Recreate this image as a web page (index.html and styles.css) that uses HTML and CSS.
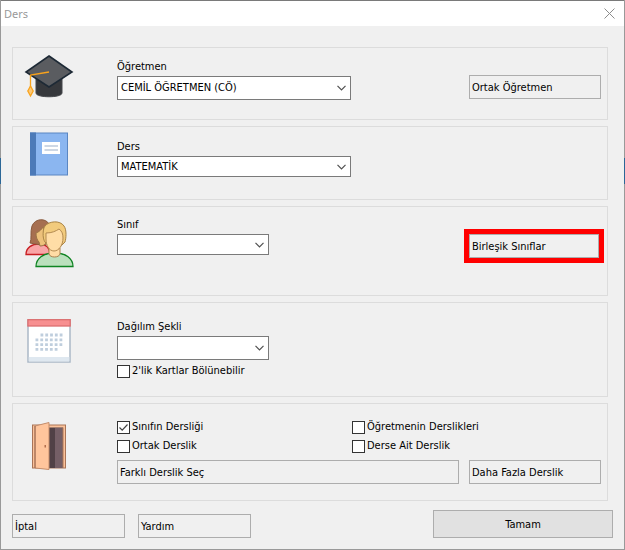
FILE: index.html
```html
<!DOCTYPE html>
<html lang="tr">

<head>
    <meta charset="utf-8">
    <title>Ders</title>
    <link rel="stylesheet" href="styles.css">
</head>

<body>
    <form class="dialog" onsubmit="return false">
        <header class="titlebar">
            <h1>Ders</h1>
            <button type="button" class="close" aria-label="Kapat">
                <svg width="11" height="11" viewBox="0 0 11 11">
                    <path d="M.5 .5l10 10M10.5 .5l-10 10" stroke="#8c8c8c" fill="none" />
                </svg>
            </button>
        </header>

        <main class="content">
            <!-- Teacher -->
            <section class="group teacher">
                <svg class="icon" viewBox="0 0 50 64">
                    <path d="M12 22v19c0 5 26 5 26 0V22z" fill="#36383c" stroke="#45474b" />
                    <path d="M25 4L48 20 25 35 2 20z" fill="#5a5c60" stroke="#1d2935" stroke-width="1.6" />
                    <path d="M25 20L6.500 23v15" fill="none" stroke="#f9a31c" stroke-width="1.300" />
                    <path d="M6.500 34l-2.700 5 2.700 5 2.700-5z" fill="#fdc978" stroke="#f9a31c" stroke-width="1.300" />
                </svg>
                <div class="fields">
                    <label for="teacher">Öğretmen</label>
                    <select id="teacher" class="wide tall">
                        <option>CEMİL ÖĞRETMEN (CÖ)</option>
                    </select>
                </div>
                <div class="side">
                    <button type="button" class="btn">Ortak Öğretmen</button>
                </div>
            </section>

            <!-- Lesson -->
            <section class="group lesson">
                <svg class="icon" viewBox="0 0 50 64">
                    <rect x="6.500" y="2" width="37" height="42" fill="#8bb6f0" stroke="#5a86c2" />
                    <rect x="6" y="1.500" width="6" height="43" fill="#4c7ab8" />
                    <rect x="18" y="11" width="18" height="12" fill="#fff" />
                    <path d="M20.500 15h13.500M20.500 19h13.500" stroke="#bdcadb" stroke-width="1.500" />
                </svg>
                <div class="fields">
                    <label for="lesson">Ders</label>
                    <select id="lesson" class="wide">
                        <option>MATEMATİK</option>
                    </select>
                </div>
            </section>

            <!-- Class -->
            <section class="group class">
                <svg class="icon" viewBox="0 0 50 64">
                    <path d="M2 43.500c0-7 6-10.500 13-10.500s11 4 11 10.500z" fill="#f9a5a7" stroke="#c81e23" stroke-width="1.300" />
                    <path d="M6 32c2-4 0-11 2-17 3-8 14-8 17-2l1 18c-3 2-5 3-9 3-4-1-7-1-11-2z" fill="#a66f50" stroke="#8a5a3d" />
                    <path d="M12 22c3-1 6-4 7-6l4 15c-2 3-4 4-7 4l-1-4c-2-2-3-5-3-9z" fill="#edc17b" stroke="#9b7445" />
                    <path d="M12 55.500c0-8 7-13.500 18.500-13.500S49 47.500 49 55.500z" fill="#bbe0bd" stroke="#0f8423" stroke-width="1.300" />
                    <path d="M25 37v6c1 4 10 4 11 0v-6z" fill="#ffdca5" stroke="#ab8250" />
                    <path d="M21 31c-3-4-2-14 0-16 4-5 15-6 19 0 3 4 2 13 1 16l-4 4H25z" fill="#f2cb7d" stroke="#a98446" />
                    <path d="M22 22c6 0 10-2 13-4 3 2 4 5 4 9 0 7-4 13-9 13s-8-6-8-12z" fill="#ffdda6" stroke="#b38a51" />
                </svg>
                <div class="fields">
                    <label for="class">Sınıf</label>
                    <select id="class">
                        <option></option>
                    </select>
                </div>
                <div class="side">
                    <div class="highlight">
                        <button type="button" class="btn">Birleşik Sınıflar</button>
                    </div>
                </div>
            </section>

            <!-- Distribution -->
            <section class="group distribution">
                <svg class="icon" viewBox="0 0 50 64">
                    <rect x="4" y="13" width="42" height="42" fill="#fff" stroke="#abb8c6" stroke-width="1.500" />
                    <rect x="4.800" y="50" width="40.500" height="4.500" fill="#dfe8f0" />
                    <rect x="3.900" y="12.700" width="42.300" height="6.300" fill="#f78f90" stroke="#dc6f70" stroke-width="1.300" />
                    <path d="M16.500 28h22" stroke="#bfcedd" stroke-width="2.800" stroke-dasharray="2.800 2" />
                    <path d="M11.500 32.800h27M11.500 37.600h27M11.500 42.400h22" stroke="#bfcedd" stroke-width="2.800" stroke-dasharray="2.800 2" />
                </svg>
                <div class="fields">
                    <label for="shape">Dağılım Şekli</label>
                    <select id="shape" class="tall">
                        <option></option>
                    </select>
                    <label class="check"><input type="checkbox">2'lik Kartlar Bölünebilir</label>
                </div>
            </section>

            <!-- Classrooms -->
            <section class="group rooms">
                <svg class="icon" viewBox="0 0 50 64">
                    <rect x="8.500" y="17" width="33" height="43" fill="#fbc29b" stroke="#a97457" />
                    <rect x="11" y="19.500" width="28" height="40.500" fill="#514146" />
                    <rect x="31" y="20" width="8" height="40" fill="#755f66" />
                    <path d="M39 19.500v40.500" stroke="#a97457" />
                    <path d="M11 18l14-3.500v47L11 60z" fill="#ffc59c" stroke="#c48d6c" />
                    <path d="M11 18v42" stroke="#9b674c" />
                    <rect x="20.500" y="37" width="1.500" height="2.500" fill="#b36f4d" />
                </svg>
                <div class="fields">
                    <div class="checks">
                        <label class="check"><input type="checkbox" checked>Sınıfın Dersliği</label>
                        <label class="check"><input type="checkbox">Öğretmenin Derslikleri</label>
                        <label class="check"><input type="checkbox">Ortak Derslik</label>
                        <label class="check"><input type="checkbox">Derse Ait Derslik</label>
                    </div>
                    <div class="room-buttons">
                        <button type="button" class="btn">Farklı Derslik Seç</button>
                        <button type="button" class="btn">Daha Fazla Derslik</button>
                    </div>
                </div>
            </section>
        </main>

        <footer class="footer">
            <button type="button" class="btn">İptal</button>
            <button type="button" class="btn">Yardım</button>
            <button type="submit" class="btn ok">Tamam</button>
        </footer>
    </form>
</body>

</html>
```

FILE: styles.css
```css
* {
    box-sizing: border-box;
}

body {
    margin: 0;
    padding: 0 1px 1px;
    /* selected row of the window behind the dialog */
    background: #999 linear-gradient(#2b6797, #2b6797) no-repeat 0 158px / 100% 26px;
    color: #000;
    font-family: "DejaVu Sans Condensed", Tahoma, sans-serif;
    font-size: 11px;
    line-height: 14px;
}

.dialog {
    min-height: calc(100vh - 1px);
    background-color: #f0f0f0;
    border-top: 1px solid #7a7a7a;
}

.titlebar {
    display: flex;
    align-items: center;
    justify-content: space-between;
    height: 25px;
    padding: 0 8px 0 3px;
    background-color: #fff;
}

.titlebar h1 {
    margin: 0;
    color: #999;
    font-family: "Noto Sans", sans-serif;
    font-size: 11px;
    font-weight: normal;
}

.close {
    display: flex;
    padding: 1px;
    border: none;
    background: none;
}

.content {
    display: flex;
    flex-direction: column;
    gap: 6px;
    padding: 21px 16px 0 11px;
}

/* One framed row: icon, fields, side button */
.group {
    display: grid;
    grid-template-columns: 104px 1fr 132px;
    align-items: start;
    padding-right: 6px;
    border: 1px solid #dcdcdc;
}

.icon {
    width: 50px;
    height: 64px;
    margin: 4px 0 0 11px;
}

.fields {
    display: flex;
    flex-direction: column;
    align-items: flex-start;
    gap: 2px;
}

.teacher {
    min-height: 73px;
}

.teacher .fields {
    padding-top: 12px;
}

.teacher .side {
    padding-top: 27px;
}

.lesson {
    min-height: 74px;
}

.lesson .fields {
    padding-top: 13px;
}

.class {
    min-height: 90px;
}

.class .fields {
    padding-top: 11px;
}

.class .side {
    padding-top: 22px;
}

.distribution {
    min-height: 95px;
}

.distribution .fields {
    padding-top: 17px;
}

.rooms {
    min-height: 98px;
}

.rooms .fields {
    grid-column: 2 / 4;
    align-items: stretch;
    gap: 7px;
    padding-top: 16px;
}

select {
    appearance: none;
    width: 152px;
    height: 21px;
    padding: 0 20px 0 3px;
    border: 1px solid #7a7a7a;
    border-radius: 0;
    background: #fff url("data:image/svg+xml,%3Csvg xmlns='http://www.w3.org/2000/svg' width='9' height='6'%3E%3Cpath d='M.5 .8l4 4 4-4' fill='none' stroke='%23505050' stroke-width='1.2'/%3E%3C/svg%3E") no-repeat right 4px center;
    color: #000;
    font: inherit;
}

.wide {
    width: 234px;
}

.tall {
    height: 24px;
}

.btn {
    width: 100%;
    height: 24px;
    padding: 2px 2px 0;
    border: 1px solid #adadad;
    background-color: #f0f0f0;
    color: #000;
    font: inherit;
    text-align: left;
}

.highlight {
    margin: 0 -3px 0 -5px;
    border: 5px solid #f00;
}

.check {
    display: flex;
    align-items: center;
    gap: 2px;
}

.distribution .check {
    margin-top: 2px;
}

.check input {
    appearance: none;
    width: 13px;
    height: 13px;
    margin: 0;
    border: 1px solid #333;
    background-color: #fff;
}

.check input:checked {
    background-image: url("data:image/svg+xml,%3Csvg xmlns='http://www.w3.org/2000/svg' width='11' height='11'%3E%3Cpath d='M1.500 5.500l2.700 2.700 5.300-5.700' fill='none' stroke='%23444' stroke-width='1.2'/%3E%3C/svg%3E");
}

.checks {
    display: grid;
    grid-template-columns: 235px 1fr;
    gap: 5px 0;
}

.room-buttons {
    display: grid;
    grid-template-columns: 1fr 132px;
    gap: 10px;
}

.footer {
    display: flex;
    align-items: flex-end;
    gap: 13px;
    padding: 9px 11px 11px;
}

.footer .btn {
    width: 113px;
}

.footer .ok {
    width: 180px;
    height: 28px;
    margin-left: auto;
    background-color: #e1e1e1;
    text-align: center;
}
```
